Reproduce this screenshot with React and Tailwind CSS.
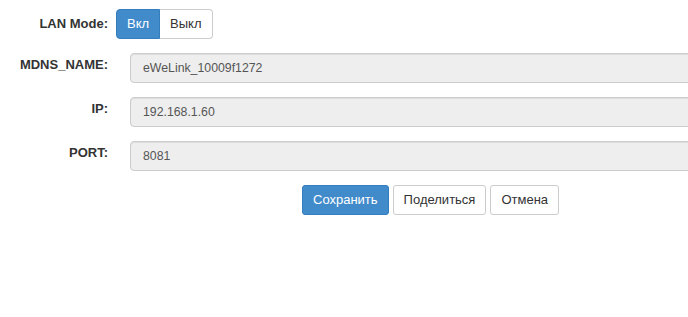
export default function App() {
  const fields = [
    { label: "MDNS_NAME:", value: "eWeLink_10009f1272" },
    { label: "IP:", value: "192.168.1.60" },
    { label: "PORT:", value: "8081" },
  ];

  return (
    <div className="w-[688px] h-[317px] overflow-hidden bg-white text-[#333] font-['Liberation_Sans',Arial,sans-serif] text-[13px] leading-[1.5]">
      <div className="w-[760px] pt-[9px] flex flex-col gap-[14px]">
        {/* LAN mode toggle */}
        <div className="flex items-center h-[30px]">
          <div className="w-[108px] text-right font-bold">LAN Mode:</div>
          <div className="ml-[8px] flex">
            <button className="h-[30px] px-[10px] bg-[#428bca] border border-[#357ebd] text-white rounded-l-[4px]">
              Вкл
            </button>
            <button className="h-[30px] px-[10px] bg-white border border-l-0 border-[#ccc] text-[#333] rounded-r-[4px]">
              Выкл
            </button>
          </div>
        </div>

        {fields.map((f) => (
          <div key={f.label} className="flex items-start h-[30px]">
            <div className="w-[108px] text-right font-bold pt-[2px]">{f.label}</div>
            <div className="ml-[22px] flex-1 h-[30px] bg-[#eee] border border-[#ccc] rounded-[4px] px-[12px] flex items-center text-[#555] text-[12.3px] shadow-[inset_0_1px_1px_rgba(0,0,0,0.075)]">
              {f.value}
            </div>
          </div>
        ))}

        {/* actions */}
        <div className="flex items-center gap-[4px] pl-[302px]">
          <button className="h-[30px] px-[10px] bg-[#428bca] border border-[#357ebd] text-white rounded-[3px]">
            Сохранить
          </button>
          <button className="h-[30px] px-[10px] bg-white border border-[#ccc] text-[#333] rounded-[3px]">
            Поделиться
          </button>
          <button className="h-[30px] px-[10px] bg-white border border-[#ccc] text-[#333] rounded-[3px]">
            Отмена
          </button>
        </div>
      </div>
    </div>
  );
}
